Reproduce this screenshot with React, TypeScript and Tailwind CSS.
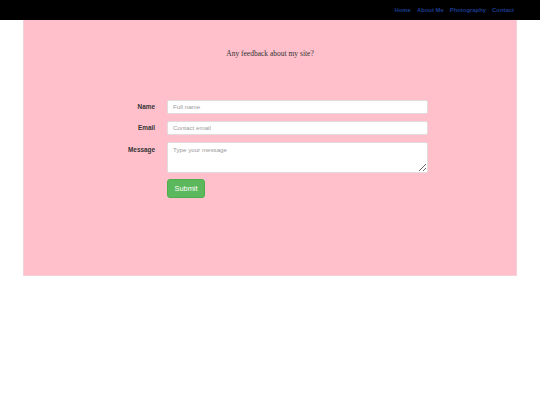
export default function App() {
    return (
        <div className="min-h-[405px] bg-white font-['Liberation_Sans',Arial,sans-serif]">
            <header className="h-[20px] bg-black flex items-center justify-end pr-[26px] gap-[6px] pt-[1px]">
                {["Home", "About Me", "Photography", "Contact"].map((item) => (
                    <a key={item} href="#" className="text-[5.9px] font-bold text-[#1c3b8e] leading-none">
                        {item}
                    </a>
                ))}
            </header>
            <main className="mx-auto w-[494px] h-[256px] bg-[#ffc0cb] border border-[#f4d2d8] border-t-0">
                <h1 className="pt-[29px] text-center text-[7.5px] leading-[10px] text-[#333] font-['Liberation_Serif',serif]">
                    Any feedback about my site?
                </h1>
                <form className="mt-[41px] flex flex-col gap-[7.5px]" onSubmit={(e) => e.preventDefault()}>
                    <div className="flex items-center">
                        <label className="w-[131px] text-right text-[6.4px] font-bold text-[#333]">Name</label>
                        <input
                            className="ml-[12px] w-[261px] h-[13.5px] bg-white border border-[#e2dcdd] rounded-[2px] px-[5px] text-[6.2px] outline-none placeholder:text-[#9a9a9a]"
                            placeholder="Full name"
                        />
                    </div>
                    <div className="flex items-center">
                        <label className="w-[131px] text-right text-[6.4px] font-bold text-[#333]">Email</label>
                        <input
                            className="ml-[12px] w-[261px] h-[13.5px] bg-white border border-[#e2dcdd] rounded-[2px] px-[5px] text-[6.2px] outline-none placeholder:text-[#9a9a9a]"
                            placeholder="Contact email"
                        />
                    </div>
                    <div className="flex items-start">
                        <label className="w-[131px] text-right text-[6.4px] font-bold text-[#333] pt-[4px] leading-[8px]">Message</label>
                        <textarea
                            className="ml-[12px] w-[261px] h-[31px] bg-white border border-[#e2dcdd] rounded-[2px] px-[5px] py-[3px] text-[6.2px] leading-[8px] outline-none placeholder:text-[#9a9a9a]"
                            placeholder="Type your message"
                        />
                    </div>
                    <div className="flex mt-[-1.5px]">
                        <button
                            type="submit"
                            className="ml-[143px] w-[38px] h-[19px] bg-[#5cb85c] border border-[#4cae4c] rounded-[3px] text-white text-[7.4px]"
                        >
                            Submit
                        </button>
                    </div>
                </form>
            </main>
        </div>
    );
}
